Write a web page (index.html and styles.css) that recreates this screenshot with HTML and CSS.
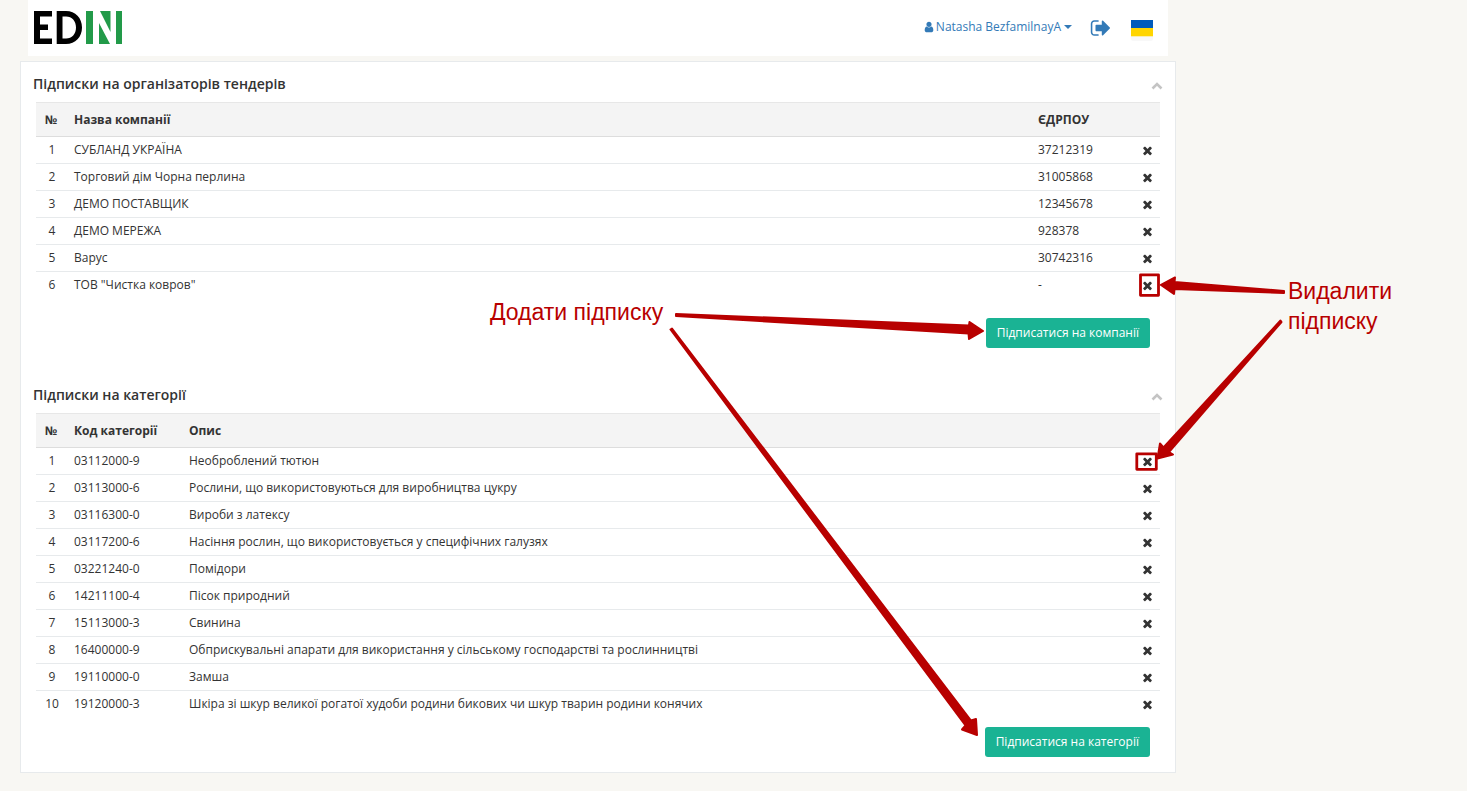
FILE: index.html
```html
<!DOCTYPE html>
<html lang="uk">
<head>
<meta charset="utf-8">
<meta name="viewport" content="width=device-width, initial-scale=1">
<title>EDIN</title>
<link rel="stylesheet" href="styles.css">
</head>
<body>
<svg class="sprite" aria-hidden="true">
  <symbol id="times" viewBox="0 0 1792 1792"><path d="M1490 1322q0 40-28 68l-136 136q-28 28-68 28t-68-28l-294-294-294 294q-28 28-68 28t-68-28l-136-136q-28-28-28-68t28-68l294-294-294-294q-28-28-28-68t28-68l136-136q28-28 68-28t68 28l294 294 294-294q28-28 68-28t68 28l136 136q28 28 28 68t-28 68l-294 294 294 294q28 28 28 68z"/></symbol>
  <symbol id="chevron" viewBox="0 0 12 8"><path d="M1.500 6.500 6 2l4.500 4.500" fill="none" stroke="currentColor" stroke-width="2.600"/></symbol>
</svg>
<div class="page">
  <header class="topbar">
    <a class="logo" href="#" aria-label="EDIN">
      <svg width="88" height="33" viewBox="0 0 88 33">
        <path d="M0 0h18v5.500H6v8h8v5.500H6v8.500h12V33H0z"/>
        <path fill-rule="evenodd" d="M22.700 0H32c9.500 0 16 7 16 16.500S41.500 33 32 33h-9.300zM28.500 5.500v22H32c6 0 10-4.500 10-11s-4-11-10-11z"/>
        <path fill="#229a49" d="M52 0h7v33h-7zM66 0h10.500v21zM65 12v21h11zM82 0h6v33h-6z"/>
      </svg>
    </a>
    <nav class="tools">
      <a class="user" href="#">
        <svg class="icon" viewBox="0 0 1792 1792"><path d="M1536 1399q0 109-62.500 187t-150.500 78h-854q-88 0-150.500-78t-62.500-187q0-85 8.500-160.500t31.500-152 58.500-131 94-89 134.500-34.500q131 128 313 128t313-128q76 0 134.500 34.500t94 89 58.500 131 31.500 152 8.500 160.500zm-256-887q0 159-112.500 271.500t-271.500 112.500-271.500-112.500-112.500-271.500 112.500-271.500 271.500-112.500 271.500 112.500 112.500 271.500z"/></svg>
        <span>Natasha BezfamilnayA</span>
        <i class="caret"></i>
      </a>
      <a class="logout" href="#" aria-label="Вийти">
        <svg width="22" height="22" viewBox="0 0 1792 1792"><path d="M704 1440q0 4 1 20t.5 26.500-3 23.500-10 19.500-20.500 6.500h-320q-119 0-203.500-84.500t-84.500-203.500v-704q0-119 84.500-203.500t203.500-84.500h320q13 0 22.500 9.500t9.500 22.500q0 4 1 20t.5 26.500-3 23.500-10 19.500-20.500 6.500h-320q-66 0-113 47t-47 113v704q0 66 47 113t113 47h312l11.500 1 11.500 3 8 5.500 7 9 2 13.500zm928-544q0 26-19 45l-544 544q-19 19-45 19t-45-19-19-45v-288h-448q-26 0-45-19t-19-45v-384q0-26 19-45t45-19h448v-288q0-26 19-45t45-19 45 19l544 544q19 19 19 45z"/></svg>
      </a>
      <a class="flag" href="#" aria-label="Українська"><svg width="22" height="21" viewBox="0 0 22 21"><path fill="#f8f8f8" d="M0 14h22v5q0 2-2 2H2q-2 0-2-2z"/><path fill="#005bbb" d="M0 0h22v8H0z"/><path fill="#ffd500" d="M0 8h22v8.300H0z"/></svg></a>
    </nav>
  </header>

  <main class="panel">
    <section class="block">
      <div class="block-head">
        <h2>Підписки на організаторів тендерів</h2>
        <button class="fold" aria-label="Згорнути"><svg width="12" height="8"><use href="#chevron"/></svg></button>
      </div>
      <table>
        <thead><tr><th class="num">№</th><th>Назва компанії</th><th class="edrpou">ЄДРПОУ</th><th class="del"></th></tr></thead>
        <tbody>
          <tr><td class="num">1</td><td>СУБЛАНД УКРАЇНА</td><td>37212319</td><td class="del"><button aria-label="Видалити"><svg><use href="#times"/></svg></button></td></tr>
          <tr><td class="num">2</td><td>Торговий дім Чорна перлина</td><td>31005868</td><td class="del"><button aria-label="Видалити"><svg><use href="#times"/></svg></button></td></tr>
          <tr><td class="num">3</td><td>ДЕМО ПОСТАВЩИК</td><td>12345678</td><td class="del"><button aria-label="Видалити"><svg><use href="#times"/></svg></button></td></tr>
          <tr><td class="num">4</td><td>ДЕМО МЕРЕЖА</td><td>928378</td><td class="del"><button aria-label="Видалити"><svg><use href="#times"/></svg></button></td></tr>
          <tr><td class="num">5</td><td>Варус</td><td>30742316</td><td class="del"><button aria-label="Видалити"><svg><use href="#times"/></svg></button></td></tr>
          <tr><td class="num">6</td><td>ТОВ "Чистка ковров"</td><td>-</td><td class="del"><button aria-label="Видалити"><svg><use href="#times"/></svg></button></td></tr>
        </tbody>
      </table>
      <div class="actions actions-wide"><button class="btn">Підписатися на компанії</button></div>
    </section>

    <section class="block">
      <div class="block-head">
        <h2>Підписки на категорії</h2>
        <button class="fold" aria-label="Згорнути"><svg width="12" height="8"><use href="#chevron"/></svg></button>
      </div>
      <table>
        <thead><tr><th class="num">№</th><th class="code">Код категорії</th><th>Опис</th><th class="del"></th></tr></thead>
        <tbody>
          <tr><td class="num">1</td><td>03112000-9</td><td>Необроблений тютюн</td><td class="del"><button aria-label="Видалити"><svg><use href="#times"/></svg></button></td></tr>
          <tr><td class="num">2</td><td>03113000-6</td><td>Рослини, що використовуються для виробництва цукру</td><td class="del"><button aria-label="Видалити"><svg><use href="#times"/></svg></button></td></tr>
          <tr><td class="num">3</td><td>03116300-0</td><td>Вироби з латексу</td><td class="del"><button aria-label="Видалити"><svg><use href="#times"/></svg></button></td></tr>
          <tr><td class="num">4</td><td>03117200-6</td><td>Насіння рослин, що використовується у специфічних галузях</td><td class="del"><button aria-label="Видалити"><svg><use href="#times"/></svg></button></td></tr>
          <tr><td class="num">5</td><td>03221240-0</td><td>Помідори</td><td class="del"><button aria-label="Видалити"><svg><use href="#times"/></svg></button></td></tr>
          <tr><td class="num">6</td><td>14211100-4</td><td>Пісок природний</td><td class="del"><button aria-label="Видалити"><svg><use href="#times"/></svg></button></td></tr>
          <tr><td class="num">7</td><td>15113000-3</td><td>Свинина</td><td class="del"><button aria-label="Видалити"><svg><use href="#times"/></svg></button></td></tr>
          <tr><td class="num">8</td><td>16400000-9</td><td>Обприскувальні апарати для використання у сільському господарстві та рослинництві</td><td class="del"><button aria-label="Видалити"><svg><use href="#times"/></svg></button></td></tr>
          <tr><td class="num">9</td><td>19110000-0</td><td>Замша</td><td class="del"><button aria-label="Видалити"><svg><use href="#times"/></svg></button></td></tr>
          <tr><td class="num">10</td><td>19120000-3</td><td>Шкіра зі шкур великої рогатої худоби родини бикових чи шкур тварин родини конячих</td><td class="del"><button aria-label="Видалити"><svg><use href="#times"/></svg></button></td></tr>
        </tbody>
      </table>
      <div class="actions"><button class="btn">Підписатися на категорії</button></div>
    </section>
  </main>

  <!-- Callouts drawn over the page -->
  <svg class="arrows" width="1467" height="791" viewBox="0 0 1467 791" aria-hidden="true">
    <g fill="none" stroke="#b80000" stroke-width="2.800" stroke-linejoin="round">
      <rect x="1140.500" y="274.800" width="18" height="20.500"/>
      <rect x="1136.800" y="453.800" width="19.500" height="15.500"/>
    </g>
    <g fill="#b80000" stroke="#b80000" stroke-width="2" stroke-linejoin="round">
      <path d="M676 314 969 325.500 969.500 322 983 331 969 339 968.500 333.500 676 316z"/>
      <path d="M672 328.500 971 720.500 976 719 977 735 962 729.500 965.500 725.500 670.500 329.500z"/>
      <path d="M1284 291 1174.500 282 1175 277.500 1161 285 1174 294 1174.500 289 1284 293z"/>
      <path d="M1280.500 320.500 1163.500 447.500 1160 443.500 1157.500 458.500 1173 454.500 1169 452 1281.500 322z"/>
    </g>
  </svg>
  <div class="note note-add">Додати підписку</div>
  <div class="note note-remove">Видалити<br>підписку</div>
</div>
</body>
</html>
```
FILE: styles.css
```css
* { box-sizing: border-box; }

body {
  margin: 0;
  background: #f8f7f3;
  color: #333;
  font: 12px/18px "Open Sans", "Noto Sans", sans-serif;
}

.sprite { position: absolute; width: 0; height: 0; }

.page { position: relative; padding: 0 20px 18px; }

.topbar {
  display: flex;
  align-items: flex-start;
  justify-content: space-between;
  max-width: 1140px;
  min-height: 56px;
  margin-left: 8px;
  padding: 11px 15px 0 6px;
  background: #fff;
}

.logo svg, .logout svg, .flag svg { display: block; }

.tools { display: flex; align-items: flex-start; padding-top: 6px; }
.tools a { color: #337ab7; text-decoration: none; }
.tools svg { fill: currentColor; }

.user { display: flex; align-items: center; padding-top: 1px; }
.icon { width: 12px; height: 12px; margin-right: 1px; }
.caret {
  margin-left: 3px;
  border: 4px solid transparent;
  border-top-color: currentColor;
  border-bottom: 0;
}
.logout { margin: 0 19px 0 18px; }
.flag { padding-top: 3px; }

.panel {
  max-width: 1156px;
  margin-top: 5px;
  padding: 0 12px;
  background: #fff;
  border: 1px solid #e7eaec;
}

.block { padding-bottom: 15px; }
.block:first-child { padding-bottom: 25px; }

.block-head {
  display: flex;
  align-items: center;
  justify-content: space-between;
  padding: 13px 0 9px;
}

h2 { margin: 0; font-size: 14px; line-height: 18px; font-weight: 600; }

button { margin: 0; padding: 0; border: 0; background: none; color: inherit; font: inherit; cursor: pointer; }

.fold { color: #c4c4c4; padding-top: 4px; }
.fold svg, .del svg { display: block; }

table {
  width: calc(100% - 6px);
  margin: 0 3px;
  border-spacing: 0;
  table-layout: fixed;
}

th, td { padding: 4px 8px; text-align: left; }
th {
  padding: 8px 8px 7px;
  background: #f4f4f4;
  border-top: 1px solid #e7e7e7;
  border-bottom: 1px solid #ddd;
}
tr + tr td { border-top: 1px solid #e7eaec; }

.num { width: 30px; padding-left: 0; padding-right: 0; text-align: center; }
td.num { padding-left: 2px; }
.edrpou { width: 104px; }
.code { width: 115px; }
.del { width: 26px; padding-left: 0; padding-right: 0; }
.del button { display: block; margin: 0 auto; }
.del svg { width: 13px; height: 13px; fill: #333; }

.actions { display: flex; justify-content: flex-end; padding: 10px 13px 0 0; }
.actions-wide { padding-top: 20px; }

.btn {
  height: 30px;
  padding: 0 11px;
  border-radius: 3px;
  background: #1ab394;
  color: #fff;
}

.arrows { position: absolute; top: 0; left: 0; pointer-events: none; }

.note {
  position: absolute;
  color: #b80000;
  font: 23px/30px "Liberation Sans", Arial, sans-serif;
}
.note-add { left: 490px; top: 297px; }
.note-remove { left: 1288px; top: 276px; }
```
